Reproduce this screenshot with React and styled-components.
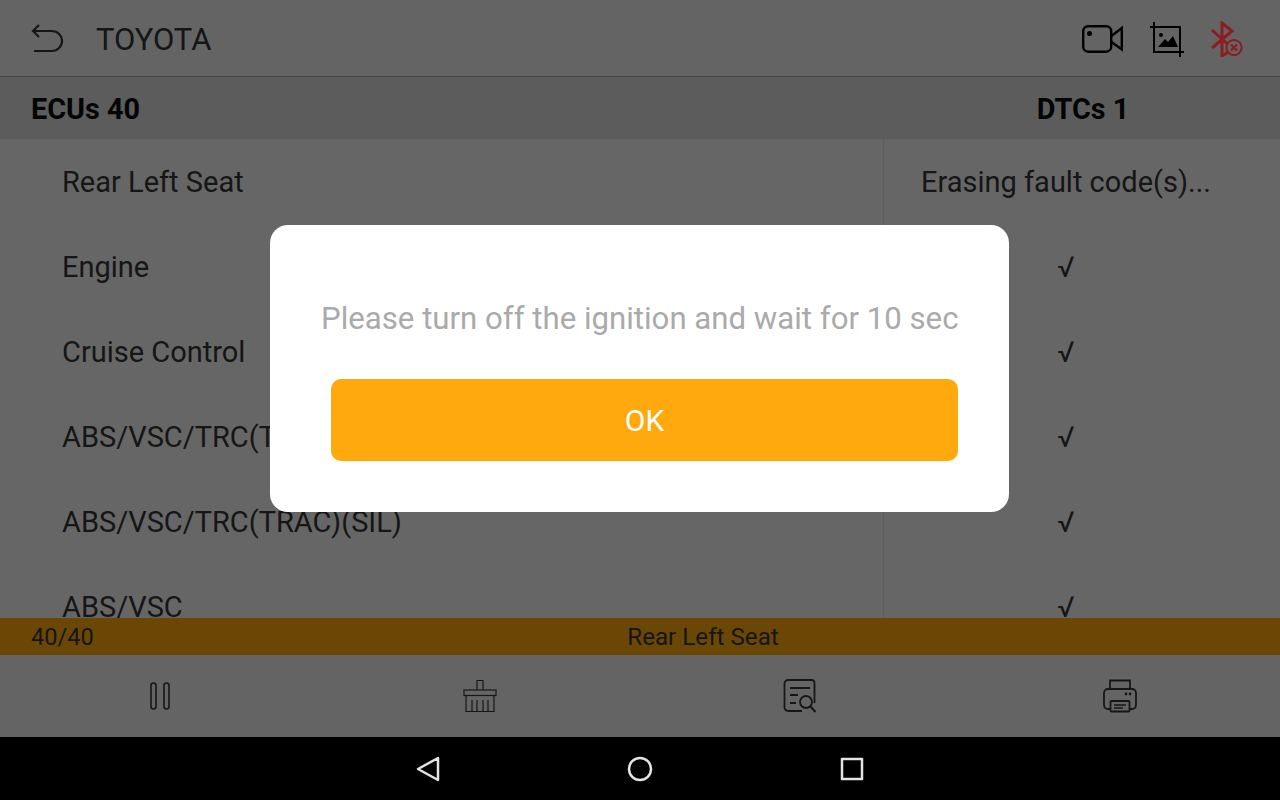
import styled, { createGlobalStyle } from "styled-components";

const Global = createGlobalStyle`
  html, body { margin: 0; padding: 0; background: #000; }
  body { font-family: Roboto, "Liberation Sans", sans-serif; }
`;

const Page = styled.div`
  width: 1280px;
  height: 800px;
  display: flex;
  flex-direction: column;
  overflow: hidden;
`;
const Screen = styled.div`
  position: relative;
  height: 737px;
  display: flex;
  flex-direction: column;
  background: #f3f3f3;
  color: #363636;
`;
const TopBar = styled.div`
  box-sizing: border-box;
  height: 77px;
  display: flex;
  align-items: center;
  padding: 2px 36px 0 31px;
  background: #eeeeee;
  border-bottom: 1px solid #aaa;
`;
const Title = styled.div`
  margin-left: 31px;
  font-size: 31px;
  flex: 1;
`;
const TopIcons = styled.div`
  display: flex;
  align-items: center;
  gap: 27px;
`;
// the red of this icon reads brighter than the dimmed page, so it sits over the overlay
const AlertIcon = styled.div`
  position: relative;
  z-index: 1;
  display: flex;
`;
const HeadRow = styled.div`
  box-sizing: border-box;
  height: 62px;
  padding-top: 2px;
  display: grid;
  grid-template-columns: 884px 396px;
  align-items: center;
  background: #dbdbdb;
  color: #0a0a0a;
  font-size: 28.8px;
  font-weight: 700;
`;
const HeadLeft = styled.div`
  padding-left: 31px;
`;
const HeadRight = styled.div`
  padding-left: 2px;
  text-align: center;
`;
const List = styled.div`
  flex: 1;
  min-height: 0;
  overflow: hidden;
`;
const Row = styled.div`
  height: 85px;
  display: grid;
  grid-template-columns: 884px 364px;
  align-items: stretch;
  font-size: 29px;
`;
const Name = styled.div`
  display: flex;
  align-items: center;
  padding: 1px 0 0 62px;
  border-right: 1px solid #dedede;
`;
const Status = styled.div`
  display: flex;
  align-items: center;
  justify-content: center;
  padding-top: 1px;
  white-space: nowrap;
`;
const Progress = styled.div`
  position: relative;
  height: 37px;
  display: flex;
  align-items: center;
  justify-content: center;
  padding-left: 126px;
  background: #ffa90f;
  font-size: 24.2px;
`;
const Count = styled.span`
  position: absolute;
  left: 31px;
  font-size: 23.6px;
`;
const Toolbar = styled.div`
  height: 82px;
  display: grid;
  grid-template-columns: repeat(4, 1fr);
  background: #eeeeee;
`;
const ToolCell = styled.div`
  display: flex;
  align-items: center;
  justify-content: center;
`;
const Overlay = styled.div`
  position: absolute;
  inset: 0;
  display: flex;
  align-items: center;
  justify-content: center;
  padding-right: 1px;
  background: rgba(0, 0, 0, 0.58);
`;
const Dialog = styled.div`
  box-sizing: border-box;
  width: 739px;
  height: 287px;
  padding: 74px 51px 0;
  background: #fff;
  border-radius: 18px;
`;
const Message = styled.div`
  height: 38px;
  line-height: 39px;
  font-size: 31.2px;
  color: #aaaaaa;
  white-space: nowrap;
  text-align: center;
`;
const OkButton = styled.button`
  display: block;
  width: 627px;
  height: 82px;
  margin: 42px 0 0 10px;
  padding: 1px 0 0;
  border: none;
  border-radius: 10px;
  background: #ffa90f;
  color: #fff;
  font-family: inherit;
  font-size: 30px;
`;
const NavBar = styled.div`
  height: 63px;
  display: flex;
  align-items: center;
  justify-content: center;
  gap: 180px;
  background: #000;
`;

const rows = [
  ["Rear Left Seat", "Erasing fault code(s)..."],
  ["Engine", "√"],
  ["Cruise Control", "√"],
  ["ABS/VSC/TRC(TRAC)", "√"],
  ["ABS/VSC/TRC(TRAC)(SIL)", "√"],
  ["ABS/VSC", "√"],
];

const BackIcon = () => (
  <svg width="34" height="34" viewBox="0 0 34 34" fill="none" stroke="#363636" strokeWidth="2.2">
    <path d="M8 3 L2 9 L8 15 M2 9 H21 A10 10 0 0 1 21 29 H3" />
  </svg>
);
const CameraIcon = () => (
  <svg width="41" height="28" viewBox="0 0 41 28" fill="none" stroke="#000" strokeWidth="2.4">
    <rect x="1.2" y="1.2" width="28" height="25.5" rx="5" />
    <path d="M29.5 11 L39.8 3 V24.5 L29.5 17" />
    <circle cx="7.5" cy="8.5" r="2.5" fill="#000" stroke="none" />
  </svg>
);
const CropIcon = () => (
  <svg width="34" height="36" viewBox="0 0 34 36" fill="none" stroke="#000" strokeWidth="2">
    <path d="M0 6 H30 V36 M4 1 V31 H34" />
    <circle cx="11" cy="14" r="2" fill="#000" stroke="none" />
    <path d="M8 26 L15 18 L18 21 L23 15 L28 26 Z" fill="#000" stroke="none" />
  </svg>
);
const BluetoothIcon = () => (
  <svg width="33" height="36" viewBox="0 0 33 36" fill="none" stroke="#8c1c1f" strokeWidth="3">
    <path d="M1 9 L22 28 L11 35 V2 L21 10 L1 27" />
    <circle cx="23" cy="26.500" r="7.600" fill="#646464" strokeWidth="2" />
    <path d="M20 23.500 L26 29.500 M26 23.500 L20 29.500" strokeWidth="2.200" />
  </svg>
);
const PauseIcon = () => (
  <svg width="20" height="28" viewBox="0 0 20 28" fill="none" stroke="#363636" strokeWidth="1.6">
    <rect x="1" y="1" width="5" height="26" rx="2.5" />
    <rect x="14" y="1" width="5" height="26" rx="2.5" />
  </svg>
);
const BrushIcon = () => (
  <svg width="34" height="34" viewBox="0 0 34 34" fill="none" stroke="#363636" strokeWidth="1.2">
    <path d="M14 11 V1.5 H20 V11" />
    <rect x="1" y="11" width="32" height="5.5" />
    <path d="M3 16.5 V32.5 H31 V16.5 M9 21 V32.5 M14 21 V32.5 M20 21 V32.5 M25 21 V32.5" />
  </svg>
);
const ReportIcon = () => (
  <svg width="34" height="34" viewBox="0 0 34 34" fill="none" stroke="#363636" strokeWidth="1.8">
    <path d="M19 32 H5 A3.5 3.5 0 0 1 1.5 28.5 V4.5 A3.5 3.5 0 0 1 5 1 H28.5 A3 3 0 0 1 31.5 4 V24" />
    <path d="M7 9 H27 M7 16 H15 M7 24 H13" />
    <circle cx="23" cy="23" r="6" />
    <path d="M27.5 27.5 L32.5 33" strokeWidth="2.2" />
  </svg>
);
const PrinterIcon = () => (
  <svg width="34" height="34" viewBox="0 0 34 34" fill="none" stroke="#363636" strokeWidth="1.8">
    <path d="M7 10 V1.5 H27 V10" />
    <path d="M7 30 H5 A4 4 0 0 1 1 26 V14 A4 4 0 0 1 5 10 H29 A4 4 0 0 1 33 14 V26 A4 4 0 0 1 29 30 H27" />
    <rect x="7.5" y="22" width="19" height="10.5" rx="1" />
    <path d="M11 26 H23 M11 29 H20" strokeWidth="1.3" />
    <circle cx="23" cy="15" r="1.4" fill="#363636" stroke="none" />
    <circle cx="27" cy="15" r="1.4" fill="#363636" stroke="none" />
  </svg>
);
const NavBack = () => (
  <svg width="32" height="32" viewBox="0 0 32 32" fill="none" stroke="#e4e4e4" strokeWidth="2.5" strokeLinejoin="round">
    <path d="M26 5 L6 16 L26 27 Z" />
  </svg>
);
const NavHome = () => (
  <svg width="32" height="32" viewBox="0 0 32 32" fill="none" stroke="#e4e4e4" strokeWidth="2.5">
    <circle cx="16" cy="16" r="11" />
  </svg>
);
const NavRecent = () => (
  <svg width="32" height="32" viewBox="0 0 32 32" fill="none" stroke="#e4e4e4" strokeWidth="2.5" strokeLinejoin="round">
    <rect x="6" y="6" width="20" height="20" />
  </svg>
);

export default function App() {
  return (
    <Page>
      <Global />
      <Screen>
        <TopBar>
          <BackIcon />
          <Title>TOYOTA</Title>
          <TopIcons>
            <CameraIcon />
            <CropIcon />
            <AlertIcon><BluetoothIcon /></AlertIcon>
          </TopIcons>
        </TopBar>
        <HeadRow>
          <HeadLeft>ECUs 40</HeadLeft>
          <HeadRight>DTCs 1</HeadRight>
        </HeadRow>
        <List>
          {rows.map(([name, status]) => (
            <Row key={name}>
              <Name>{name}</Name>
              <Status>{status}</Status>
            </Row>
          ))}
        </List>
        <Progress>
          <Count>40/40</Count>
          Rear Left Seat
        </Progress>
        <Toolbar>
          <ToolCell><PauseIcon /></ToolCell>
          <ToolCell><BrushIcon /></ToolCell>
          <ToolCell><ReportIcon /></ToolCell>
          <ToolCell><PrinterIcon /></ToolCell>
        </Toolbar>
        <Overlay>
          <Dialog>
            <Message>Please turn off the ignition and wait for 10 sec</Message>
            <OkButton>OK</OkButton>
          </Dialog>
        </Overlay>
      </Screen>
      <NavBar>
        <NavBack />
        <NavHome />
        <NavRecent />
      </NavBar>
    </Page>
  );
}
